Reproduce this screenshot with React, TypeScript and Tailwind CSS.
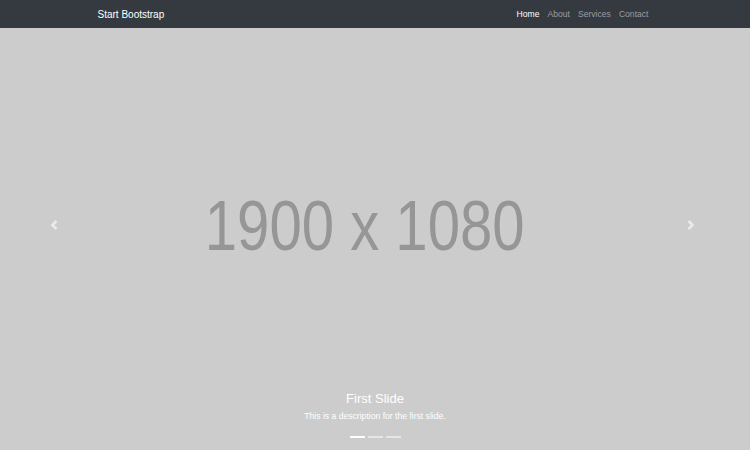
import React from "react";

const font = { fontFamily: '"Liberation Sans", Arial, sans-serif' };

function Chevron({ dir }: { dir: "left" | "right" }) {
  return (
    <svg width="10" height="10" viewBox="0 0 8 8" fill="#fff">
      {dir === "left" ? (
        <path d="M5.25 0l-4 4 4 4 1.5-1.5L4.25 4l2.5-2.5L5.25 0z" />
      ) : (
        <path d="M2.75 0l-1.5 1.5L3.75 4l-2.5 2.5L2.75 8l4-4-4-4z" />
      )}
    </svg>
  );
}

export default function App() {
  return (
    <div className="relative w-[750px] h-[450px] overflow-hidden bg-[#cccccc]" style={font}>
      {/* Slide image */}
      <div className="flex h-full w-full items-center justify-center pr-[20px] pt-[2px]">
        <div className="scale-x-[0.83] text-[70px] leading-none text-[#969696]">1900 x 1080</div>
      </div>

      {/* Navbar (fixed top) */}
      <nav className="absolute left-0 right-0 top-0 h-[28px] bg-[#343a40]">
        <div className="mx-auto flex h-full w-[570px] items-center justify-between px-[7.5px]">
          <span className="text-[10px] text-white">Start Bootstrap</span>
          <ul className="flex items-center text-[8.6px]">
            <li className="px-[4px] text-white">Home</li>
            <li className="px-[4px] text-[#9a9da0]">About</li>
            <li className="px-[4px] text-[#9a9da0]">Services</li>
            <li className="px-[4px] text-[#9a9da0]">Contact</li>
          </ul>
        </div>
      </nav>

      {/* Controls */}
      <div className="absolute left-[49px] top-[220px] opacity-60">
        <Chevron dir="left" />
      </div>
      <div className="absolute left-[686px] top-[220px] opacity-60">
        <Chevron dir="right" />
      </div>

      {/* Caption */}
      <div className="absolute left-0 right-0 top-[390px] flex flex-col items-center text-white">
        <div className="text-[13px] leading-[18px]">First Slide</div>
        <div className="mt-[2px] text-[8.6px] leading-[12px]">This is a description for the first slide.</div>
        <div className="mt-[14px] flex gap-[3px]">
          <span className="h-[2px] w-[15px] bg-white" />
          <span className="h-[2px] w-[15px] bg-white opacity-50" />
          <span className="h-[2px] w-[15px] bg-white opacity-50" />
        </div>
      </div>
    </div>
  );
}
